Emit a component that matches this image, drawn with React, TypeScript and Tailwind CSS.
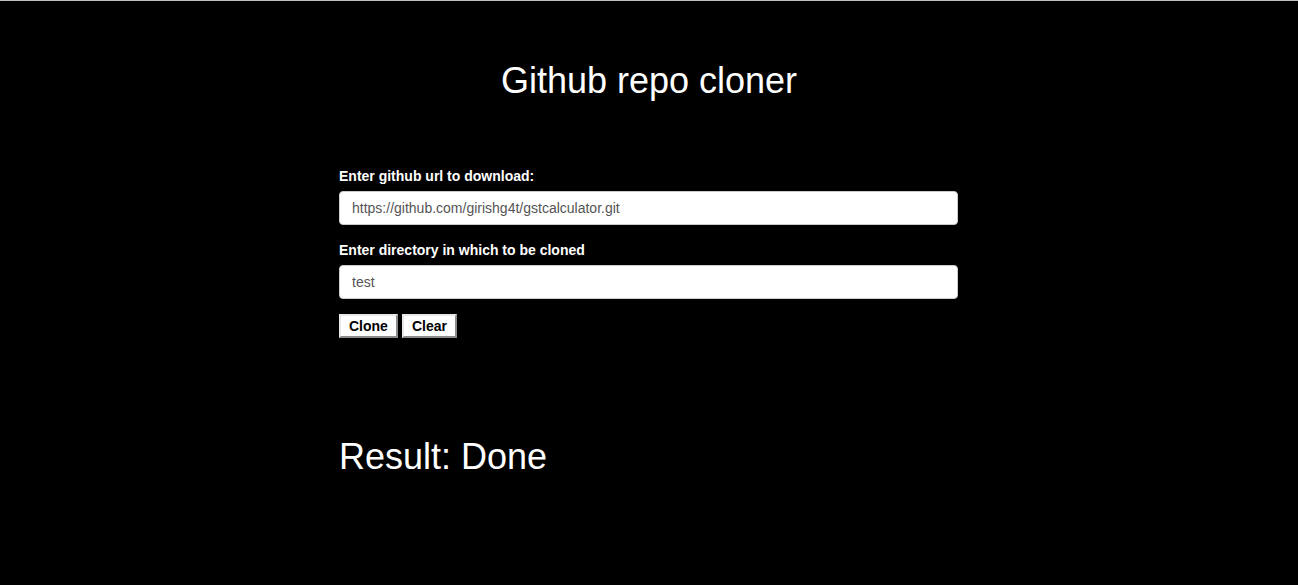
import { useState } from "react";

export default function App() {
  const [url, setUrl] = useState("https://github.com/girishg4t/gstcalculator.git");
  const [dir, setDir] = useState("test");
  const [result, setResult] = useState("Done");

  return (
    <div
      className="min-h-screen bg-black border-t border-[#c0c0c0] text-white"
      style={{ fontFamily: '"Liberation Sans", Arial, sans-serif' }}
    >
      <h1 className="pt-[59px] text-center text-[36px] leading-[41px] font-normal">
        Github repo cloner
      </h1>

      <div className="mx-auto mt-[67px] w-[620px]">
        <label className="block mb-[7px] text-[14px] leading-4 font-bold">
          Enter github url to download:
        </label>
        <input
          type="text"
          value={url}
          onChange={(e) => setUrl(e.target.value)}
          className="block w-[619px] h-[34px] px-3 rounded bg-white border border-[#ccc] text-[14px] text-[#555] outline-none"
        />

        <label className="block mt-[17px] mb-[7px] text-[14px] leading-4 font-bold">
          Enter directory in which to be cloned
        </label>
        <input
          type="text"
          value={dir}
          onChange={(e) => setDir(e.target.value)}
          className="block w-[619px] h-[34px] px-3 rounded bg-white border border-[#ccc] text-[14px] text-[#555] outline-none"
        />

        <div className="mt-[15px] flex gap-1">
          <button
            onClick={() => setResult("Done")}
            className="h-6 px-[8px] bg-white text-black text-[14px] leading-4 font-bold border-2 border-t-[#e8e8e8] border-l-[#e8e8e8] border-b-[#8a8a8a] border-r-[#8a8a8a]"
          >
            Clone
          </button>
          <button
            onClick={() => {
              setUrl("");
              setDir("");
              setResult("");
            }}
            className="h-6 px-[8px] bg-white text-black text-[14px] leading-4 font-bold border-2 border-t-[#e8e8e8] border-l-[#e8e8e8] border-b-[#8a8a8a] border-r-[#8a8a8a]"
          >
            Clear
          </button>
        </div>

        <h2 className="mt-[98px] text-[36px] leading-[41px] font-normal">
          Result: {result}
        </h2>
      </div>
    </div>
  );
}
